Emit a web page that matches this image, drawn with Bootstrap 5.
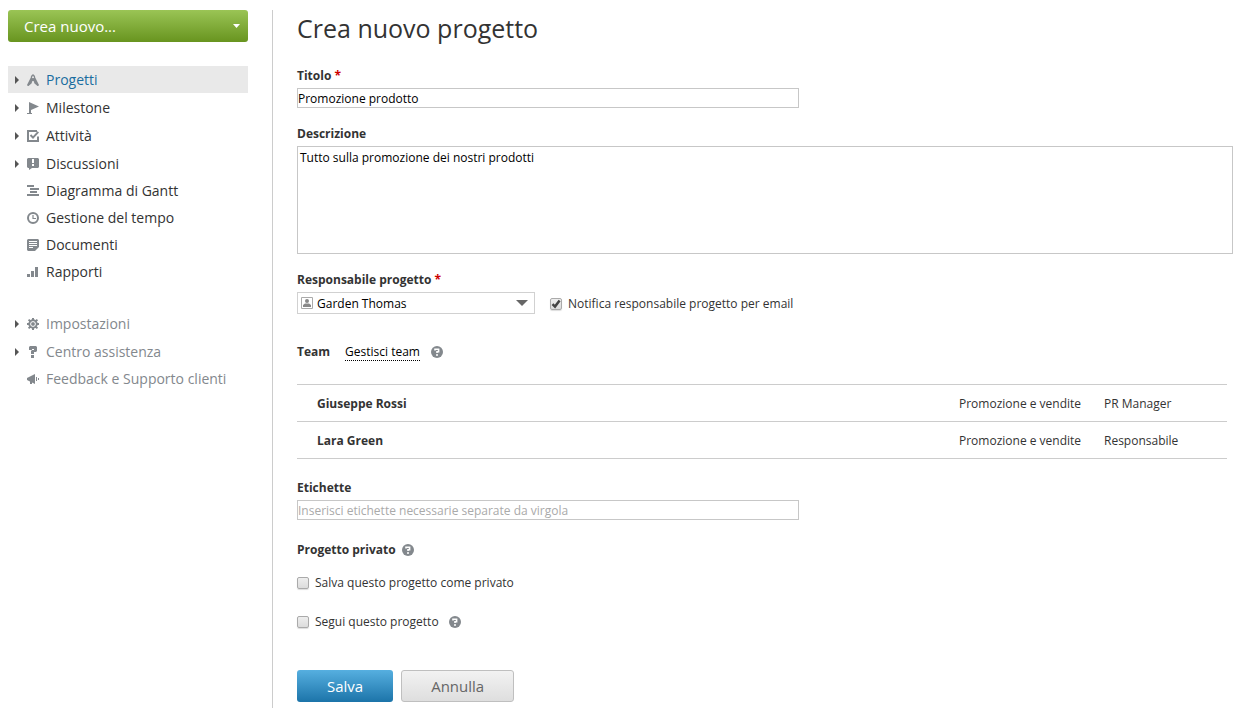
<!DOCTYPE html>
<html lang="it">
<head>
<meta charset="utf-8">
<meta name="viewport" content="width=device-width, initial-scale=1">
<title>Crea nuovo progetto</title>
<link href="https://cdn.jsdelivr.net/npm/bootstrap@5.3.0/dist/css/bootstrap.min.css" rel="stylesheet">
<style>
  body { font-family: "Open Sans", sans-serif; font-size: 12px; line-height: 16px; color: #333; background: #fff; }
  .shell { min-height: 100vh; padding: 10px 7px 0 8px; }
  .sidebar { width: 240px; margin-right: 24px; }
  .content-pane { border-left: 1px solid #ccc; padding: 0 0 6px 24px; min-width: 0; }

  .btn-create { height: 32px; padding: 0 8px 0 16px; border: 0; border-radius: 3px; font-size: 15px; line-height: 20px; color: #fff; background: linear-gradient(#9ac455, #68941f); }
  .btn-create:hover { color: #fff; background: #7aa530; }
  .side-nav { margin-top: 24px; }
  .side-nav .nav-link { display: flex; align-items: center; height: 27px; padding: 0 0 0 7px; font-size: 14px; line-height: 20px; color: #333; }
  .side-nav .leaf .nav-link { padding-left: 19px; }
  .side-nav .tree + .tree { margin-top: 1px; }
  .side-nav .nav-link.active { background: #e9e9e9; color: #1a6da0; }
  .side-nav.muted { margin-top: 25px; }
  .side-nav.muted .nav-link { color: #83888d; }
  .side-nav .arrow { width: 4px; height: 8px; margin-right: 8px; fill: #555; }
  .side-nav .glyph { width: 12px; height: 12px; margin-right: 7px; fill: #83888d; }

  h1 { font-size: 25px; line-height: 36px; margin: 0 0 22px; font-weight: 400; color: #333; }
  .field-label { font-weight: 700; margin: 0 0 4px; display: block; }
  .required { color: #c00; }
  .field-group { margin-bottom: 18px; }
  .form-control.box { font-size: 12px; line-height: 16px; padding: 1px 0; height: 20px; border: 1px solid #c7c7c7; border-radius: 0; color: #000; }
  .form-control.box::placeholder { color: #aaa; }
  .form-control.short { max-width: 502px; }
  textarea.form-control.box { height: 108px; padding: 3px 2px; resize: none; }
  .person-select { width: 238px; margin-right: 15px; }
  .person-select select { height: 22px; padding: 2px 24px 0 19px; font-size: 12px; line-height: 16px; border: 1px solid #d1d1d1; border-radius: 0; color: #000;
    background: #fff url("data:image/svg+xml,%3Csvg xmlns='http://www.w3.org/2000/svg' viewBox='0 0 12 6'%3E%3Cpath d='M0 0h12L6 6z' fill='%23666'/%3E%3C/svg%3E") no-repeat right 6px center / 12px 6px; }
  .person-select svg { position: absolute; left: 4px; top: 5px; width: 12px; height: 12px; pointer-events: none; }
  .notify-row { padding-top: 2px; }

  .tick { appearance: none; flex: none; width: 12px; height: 12px; margin: 0 6px 0 0; border: 1px solid #aaa; border-radius: 2px; background: linear-gradient(#eee, #dcdcdc); box-shadow: 0 1px 1px #ddd; }
  .tick:checked { background: url("data:image/svg+xml,%3Csvg xmlns='http://www.w3.org/2000/svg' viewBox='0 0 10 10'%3E%3Cpath d='M1.500 5.200l2.500 2.400L8.600 1.600' fill='none' stroke='%23444' stroke-width='2.500'/%3E%3C/svg%3E") center / 10px 10px no-repeat, linear-gradient(#eee, #dcdcdc); }
  .manage-link { color: #000; text-decoration: none; border-bottom: 1px dotted #000; margin: 0 11px 0 15px; }
  .help-btn { padding: 0; border: 0; background: none; width: 12px; height: 12px; display: flex; }

  .team-row { height: 16px; margin: 30px 0 24px; }
  .team-table { margin: 0 6px 21px 0; }
  .team-table table { width: 100%; border-top: 1px solid #ccc; }
  .team-table td { height: 37px; padding: 1px 0 0; border-bottom: 1px solid #ccc; vertical-align: middle; }
  .team-table td:first-child { padding-left: 20px; font-weight: 700; }
  .team-table .dept { width: 145px; }
  .team-table .post { width: 123px; }

  .tags-group { margin-bottom: 22px; }
  .private-head { gap: 6px; margin-bottom: 17px; }
  .private-row { margin-bottom: 23px; }
  .follow-help { margin-left: 10px; }
  .form-actions { margin-top: 40px; }
  .btn-form { height: 32px; padding: 0 30px; border-radius: 3px; font-size: 15px; line-height: 20px; }
  .btn-save { border: 0; color: #fff; background: linear-gradient(#56afe0, #1c74a9); }
  .btn-save:hover { color: #fff; background: #3d96c6; }
  .btn-cancel { border: 1px solid #bfbfbf; padding: 0 29px; color: #666; background: linear-gradient(#f2f2f2, #dedede); }
</style>
</head>
<body>
<svg class="d-none" aria-hidden="true">
  <symbol id="arrow" viewBox="0 0 4 8"><path d="M0 0L4 4L0 8z"/></symbol>
  <symbol id="help" viewBox="0 0 12 12"><circle cx="6" cy="6" r="6" fill="#83888d"/><path d="M4 4.500V3.200h3.600v2.600H6v1.300M5 9h2" fill="none" stroke="#fff" stroke-width="1.600"/></symbol>
</svg>
<div class="shell d-flex">
  <aside class="sidebar flex-shrink-0">
    <button type="button" class="btn btn-create w-100 d-flex align-items-center justify-content-between">Crea nuovo...
      <svg width="7" height="4" viewBox="0 0 7 4" aria-hidden="true"><path d="M0 0h7L3.500 4z" fill="#fff"/></svg>
    </button>
    <ul class="nav flex-column side-nav">
      <li class="nav-item tree"><a class="nav-link active" href="#"><svg class="arrow"><use href="#arrow"/></svg><svg class="glyph" viewBox="0 0 12 12"><path fill-rule="evenodd" d="M5.500 0h1v1C7.800 1.300 8.300 2.200 8.100 3.200L12 11l-.8 1h-.7L7.500 9.500 6.600 7H5.400L4.500 9.500 1.500 12H.800L0 11l3.900-7.800C3.700 2.200 4.200 1.300 5.500 1zM6 2.200a1 1 0 100 2 1 1 0 000-2z"/></svg>Progetti</a></li>
      <li class="nav-item tree"><a class="nav-link" href="#"><svg class="arrow"><use href="#arrow"/></svg><svg class="glyph" viewBox="0 0 12 12"><path d="M2 0l10 4.500L4 8v3h1v1H0v-1h2z"/></svg>Milestone</a></li>
      <li class="nav-item tree"><a class="nav-link" href="#"><svg class="arrow"><use href="#arrow"/></svg><svg class="glyph" viewBox="0 0 12 12"><path d="M10 1H1v10h10V6.500" fill="none" stroke="#83888d" stroke-width="2"/><path d="M3.500 5l2.500 2.600L11.300 1.800" fill="none" stroke="#83888d" stroke-width="2"/></svg>Attività</a></li>
      <li class="nav-item tree"><a class="nav-link" href="#"><svg class="arrow"><use href="#arrow"/></svg><svg class="glyph" viewBox="0 0 12 12"><path fill-rule="evenodd" d="M1 0h10l1 1v8l-1 1H5l-3 2v-2H1L0 9V1zM5 1v4h2V1zM5 6v2h2V6z"/></svg>Discussioni</a></li>
      <li class="nav-item leaf"><a class="nav-link" href="#"><svg class="glyph" viewBox="0 0 12 12"><path d="M0 0h7v2H0zM3 3h9v2H3zM3 6h7v2H3zM0 9h12v2H0z"/></svg>Diagramma di Gantt</a></li>
      <li class="nav-item leaf"><a class="nav-link" href="#"><svg class="glyph" viewBox="0 0 12 12"><circle cx="6" cy="6" r="5" fill="none" stroke="#83888d" stroke-width="2"/><path d="M6 3v3.500h3" fill="none" stroke="#83888d" stroke-width="1.200"/></svg>Gestione del tempo</a></li>
      <li class="nav-item leaf"><a class="nav-link" href="#"><svg class="glyph" viewBox="0 0 12 12"><path fill-rule="evenodd" d="M1 0h10l1 1v7l-4 4H1l-1-1V1zM2 2v1h8V2zM2 4v1h8V4zM2 6v1h8V6zM2 8v1h4V8z"/></svg>Documenti</a></li>
      <li class="nav-item leaf"><a class="nav-link" href="#"><svg class="glyph" viewBox="0 0 12 12"><path d="M0 8h3v3H0zM4 5h3v6H4zM8 1h3v10H8z"/></svg>Rapporti</a></li>
    </ul>
    <ul class="nav flex-column side-nav muted">
      <li class="nav-item tree"><a class="nav-link" href="#"><svg class="arrow"><use href="#arrow"/></svg><svg class="glyph" viewBox="0 0 12 12"><path d="M6 0v12M0 6h12M1.600 1.600l8.800 8.800M10.400 1.600l-8.800 8.800" stroke="#83888d" stroke-width="2"/><circle cx="6" cy="6" r="4.700"/><circle cx="6" cy="6" r="2.400" fill="none" stroke="#fff" stroke-width="1"/></svg>Impostazioni</a></li>
      <li class="nav-item tree"><a class="nav-link" href="#"><svg class="arrow"><use href="#arrow"/></svg><svg class="glyph" viewBox="0 0 12 12"><path d="M2 1l1-1h6l1 1v4L9 6H7v2H4V5l1-1h2V3H5v1H2zM4 9h3v3H4z"/></svg>Centro assistenza</a></li>
      <li class="nav-item leaf"><a class="nav-link" href="#"><svg class="glyph" viewBox="0 0 12 12"><path d="M0 5l8-4v10L5 9.500V11H3V8.500L0 7zM9 4h1v4H9zM11 5h1v2h-1z"/></svg>Feedback e Supporto clienti</a></li>
    </ul>
  </aside>

  <main class="content-pane flex-grow-1">
    <h1>Crea nuovo progetto</h1>
    <form>
      <div class="field-group">
        <label class="field-label" for="title">Titolo <span class="required">*</span></label>
        <input id="title" type="text" class="form-control box short" value="Promozione prodotto">
      </div>
      <div class="field-group">
        <label class="field-label" for="description">Descrizione</label>
        <textarea id="description" class="form-control box">Tutto sulla promozione dei nostri prodotti</textarea>
      </div>
      <div>
        <label class="field-label" for="manager">Responsabile progetto <span class="required">*</span></label>
        <div class="d-flex align-items-center">
          <div class="person-select position-relative">
            <select id="manager" class="form-select"><option>Garden Thomas</option></select>
            <svg viewBox="0 0 12 12" aria-hidden="true"><path d="M.5.500h11v11H.5z" fill="#fff" stroke="#aaa"/><circle cx="6" cy="4" r="2" fill="#888"/><path d="M2 10V8l2-1.500h4L10 8v2z" fill="#888"/></svg>
          </div>
          <div class="notify-row d-flex align-items-center">
            <input id="notify" class="tick" type="checkbox" checked>
            <label for="notify">Notifica responsabile progetto per email</label>
          </div>
        </div>
      </div>
      <div class="team-row d-flex align-items-center">
        <span class="fw-bold">Team</span>
        <a class="manage-link" href="#">Gestisci team</a>
        <button type="button" class="help-btn" aria-label="Aiuto team"><svg width="12" height="12"><use href="#help"/></svg></button>
      </div>
      <div class="team-table">
        <table>
          <tbody>
            <tr><td>Giuseppe Rossi</td><td class="dept">Promozione e vendite</td><td class="post">PR Manager</td></tr>
            <tr><td>Lara Green</td><td class="dept">Promozione e vendite</td><td class="post">Responsabile</td></tr>
          </tbody>
        </table>
      </div>
      <div class="tags-group">
        <label class="field-label" for="tags">Etichette</label>
        <input id="tags" type="text" class="form-control box short" placeholder="Inserisci etichette necessarie separate da virgola">
      </div>
      <div class="private-head d-flex align-items-center">
        <span class="fw-bold">Progetto privato</span>
        <button type="button" class="help-btn" aria-label="Aiuto progetto privato"><svg width="12" height="12"><use href="#help"/></svg></button>
      </div>
      <div class="private-row d-flex align-items-center">
        <input id="private" class="tick" type="checkbox">
        <label for="private">Salva questo progetto come privato</label>
      </div>
      <div class="d-flex align-items-center">
        <input id="follow" class="tick" type="checkbox">
        <label for="follow">Segui questo progetto</label>
        <button type="button" class="help-btn follow-help" aria-label="Aiuto segui progetto"><svg width="12" height="12"><use href="#help"/></svg></button>
      </div>
      <div class="form-actions d-flex gap-2">
        <button type="submit" class="btn btn-form btn-save">Salva</button>
        <button type="button" class="btn btn-form btn-cancel">Annulla</button>
      </div>
    </form>
  </main>
</div>
<script src="https://cdn.jsdelivr.net/npm/bootstrap@5.3.0/dist/js/bootstrap.bundle.min.js"></script>
</body>
</html>
